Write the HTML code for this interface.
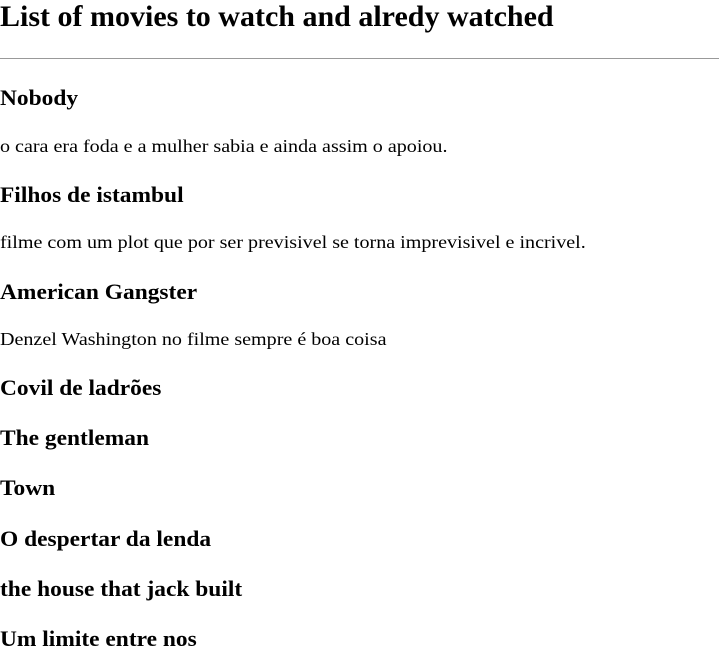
<!DOCTYPE html>
<html><head><meta charset="utf-8"><style>
body{margin:0;background:#fff;font-family:"Liberation Serif",serif;color:#000;width:723px;height:662px;position:relative;overflow:hidden}
div{position:absolute;left:0;white-space:nowrap;transform-origin:0 50%}
.h1{font-size:30px;font-weight:bold;line-height:34px}
.h{font-size:22px;font-weight:bold;line-height:26px;transform:scaleX(1.065)}
.p{font-size:18px;line-height:22px;transform:scaleX(1.115)}
hr{position:absolute;left:0;top:58px;width:719px;margin:0;border:0;border-top:1px solid #999}
</style></head><body>
<div class="h1" style="top:0px">List of movies to watch and alredy watched</div>
<hr>
<div class="h" style="top:85px">Nobody</div>
<div class="p" style="top:135px">o cara era foda e a mulher sabia e ainda assim o apoiou.</div>
<div class="h" style="top:182px">Filhos de istambul</div>
<div class="p" style="top:231px">filme com um plot que por ser previsivel se torna imprevisivel e incrivel.</div>
<div class="h" style="top:279px">American Gangster</div>
<div class="p" style="top:328px">Denzel Washington no filme sempre é boa coisa</div>
<div class="h" style="top:375px">Covil de ladrões</div>
<div class="h" style="top:425px">The gentleman</div>
<div class="h" style="top:475px">Town</div>
<div class="h" style="top:526px">O despertar da lenda</div>
<div class="h" style="top:576px">the house that jack built</div>
<div class="h" style="top:626px">Um limite entre nos</div>
</body></html>
